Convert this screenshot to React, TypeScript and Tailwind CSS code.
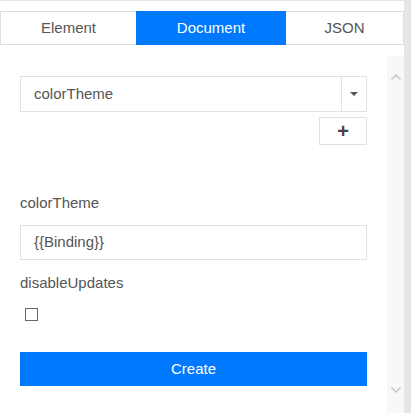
import { ChevronDown, ChevronUp } from "lucide-react";

const font = { fontFamily: "'Liberation Sans', Arial, sans-serif" };

export default function App() {
  return (
    <div className="flex h-[413px] w-[411px] bg-white text-[15px] text-[#555]" style={font}>
      <div className="flex min-w-0 flex-1 flex-col border-t border-[#e3e3e3]">
        {/* tabs */}
        <div className="mt-[10px] flex h-[34px]">
          <button className="w-[136px] border border-r-0 border-[#dedede] text-[#555]">Element</button>
          <button className="w-[150px] bg-[#0079ff] text-white">Document</button>
          <button className="flex-1 border border-l-0 border-[#dedede] text-[#555]">JSON</button>
        </div>

        <div className="flex min-h-0 flex-1 pt-[11px]">
          <div className="flex-1 px-5 pt-[20px]">
            <div className="flex h-9 border border-[#e2e2e2]">
              <div className="flex flex-1 items-center px-[13px] text-[#555]">colorTheme</div>
              <div className="flex w-[25px] items-center justify-center border-l border-[#e2e2e2]">
                <div className="h-0 w-0 border-x-[4px] border-t-[4px] border-x-transparent border-t-[#555]" />
              </div>
            </div>
            <div className="mt-[5px] flex justify-end">
              <button className="flex h-[28px] w-[48px] items-center justify-center border border-[#e0e0e0] text-[20px] font-bold leading-none text-[#444]">
                +
              </button>
            </div>

            <div className="mt-[50px] leading-none">colorTheme</div>
            <div className="mt-[15px] flex h-[35px] items-center border border-[#e2e2e2] px-[13px]">{"{{Binding}}"}</div>
            <div className="mt-[15px] leading-none">disableUpdates</div>
            <div className="mt-[18px] ml-[5px] h-[13px] w-[13px] border border-[#666]" />
            <button className="mt-[31px] flex h-[34px] w-full items-center justify-center bg-[#0079ff] text-white">
              Create
            </button>
          </div>
          <div className="flex w-[17px] flex-col items-center justify-between bg-[#f8f8f8] pt-[13px] pb-[15px] text-[#c8c8c8]">
            <ChevronUp size={16} strokeWidth={2.5} />
            <ChevronDown size={16} strokeWidth={2.5} />
          </div>
        </div>
      </div>
      <div className="w-[7px] bg-[#e6e6e6]" />
    </div>
  );
}
